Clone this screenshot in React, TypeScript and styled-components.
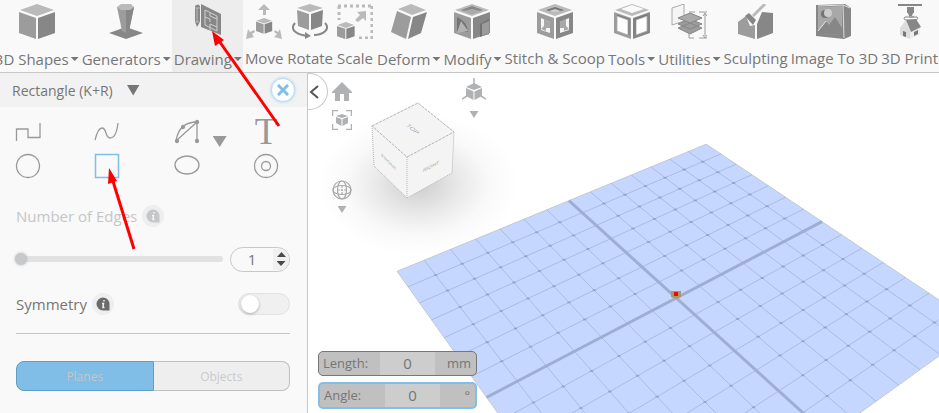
import React, { useState } from "react";
import styled, { createGlobalStyle } from "styled-components";

const GlobalStyle = createGlobalStyle`
  * { box-sizing: border-box; }
  body { margin: 0; font-family: "Open Sans", "Noto Sans", sans-serif; color: #767676; background: #fff; overflow: hidden; }
  button, input { font: inherit; color: inherit; }
  button { border: 0; padding: 0; background: none; cursor: pointer; }
  svg { display: block; }
`;

const Page = styled.div`
  position: relative;
  display: flex;
  flex-direction: column;
  height: 100vh;
  overflow: hidden;
`;

const Toolbar = styled.header`
  display: flex;
  justify-content: flex-end;
  flex: none;
  height: 73px;
  background: #f9f9f9;
  border-bottom: 1px solid #c8c8c8;
  overflow: hidden;
`;

const ToolbarItem = styled.button<{ $active?: boolean; $roomy?: boolean }>`
  display: flex;
  flex: none;
  flex-direction: column;
  align-items: center;
  gap: 8px;
  padding: 4px ${(p) => (p.$roomy ? 2 : 1)}px 0 2px;
  background: ${(p) => (p.$active ? "#ededed" : "transparent")};
`;

const ToolbarLabel = styled.span<{ $menu?: boolean }>`
  display: flex;
  align-items: center;
  gap: 2px;
  padding-top: ${(p) => (p.$menu ? 1 : 0)}px;
  font-size: 15px;
  line-height: 22px;
  white-space: nowrap;
`;

const Triangle = styled.span<{ $w: number; $h: number; $color: string }>`
  display: block;
  flex: none;
  width: ${(p) => p.$w}px;
  height: ${(p) => p.$h}px;
  background: ${(p) => p.$color};
  clip-path: polygon(0 0, 100% 0, 50% 100%);
`;

const Workspace = styled.div`
  display: flex;
  flex: 1;
  min-height: 0;
`;

const Panel = styled.aside`
  flex: none;
  width: 308px;
  background: #f9f9f9;
  border-right: 1px solid #c8c8c8;
`;

const PanelHeader = styled.div`
  display: flex;
  align-items: center;
  justify-content: space-between;
  height: 34px;
  padding: 0 12px;
  background: #f2f2f2;
`;

const PanelTitle = styled.button`
  display: flex;
  align-items: center;
  gap: 14px;
  font-size: 14px;
`;

const CloseButton = styled.button`
  display: grid;
  place-items: center;
  width: 24px;
  height: 24px;
  border: 1px solid #b9dcf3;
  border-radius: 50%;
  background: #fff;
  box-shadow: 0 0 3px #9fd0f0;
`;

const ToolGrid = styled.div`
  display: grid;
  grid-template-columns: repeat(4, 24px);
  grid-auto-rows: 34px;
  justify-content: space-between;
  align-items: center;
  padding: 8px 29px 0 16px;
`;

const ShapeTool = styled.button`
  position: relative;
  display: grid;
  place-items: center;
  width: 24px;
  height: 34px;
`;

const ToolMenuMark = styled.span`
  position: absolute;
  left: 38px;
  top: 21px;
`;

const TextGlyph = styled.span`
  font-family: "Liberation Serif", serif;
  font-size: 37px;
  line-height: 34px;
  color: #999;
`;

const Options = styled.div`
  display: flex;
  flex-direction: column;
  padding: 21px 17px 0 16px;
`;

const OptionTitle = styled.div<{ $dim?: boolean }>`
  display: flex;
  align-items: center;
  gap: 5px;
  height: 24px;
  font-size: 15px;
  color: ${(p) => (p.$dim ? "#c4c6c8" : "#767676")};
`;

const InfoButton = styled.button`
  width: 22px;
  height: 22px;
`;

const SliderRow = styled.div`
  display: flex;
  align-items: center;
  gap: 7px;
  height: 26px;
  margin: 18px 0 20px;
`;

const Slider = styled.input`
  appearance: none;
  flex: 1;
  min-width: 0;
  height: 14px;
  margin: 0 0 0 -1px;
  background: transparent;
  &::-webkit-slider-runnable-track {
    height: 6px;
    border-radius: 3px;
    background: #e2e2e2;
  }
  &::-webkit-slider-thumb {
    appearance: none;
    width: 12px;
    height: 12px;
    margin-top: -3px;
    border-radius: 50%;
    background: #c6c8ca;
    box-shadow: 0 0 3px #b8b8b8;
  }
`;

const NumberBox = styled.div`
  display: flex;
  align-items: center;
  flex: none;
  width: 60px;
  height: 25px;
  border: 1px solid #c8c8c8;
  border-radius: 13px;
  overflow: hidden;
`;

const NumberInput = styled.input`
  width: 42px;
  padding: 0;
  border: 0;
  background: none;
  text-align: center;
  font-size: 15px;
`;

const Stepper = styled.div`
  display: flex;
  flex: 1;
  flex-direction: column;
  align-items: center;
  justify-content: center;
  gap: 4px;
  height: 21px;
  background: #f0f0f0;
`;

const StepButton = styled.button<{ $up?: boolean }>`
  transform: ${(p) => (p.$up ? "rotate(180deg)" : "none")};
`;

const SwitchRow = styled.div`
  display: flex;
  align-items: center;
  justify-content: space-between;
`;

const Switch = styled.input`
  appearance: none;
  display: flex;
  align-items: center;
  width: 52px;
  height: 22px;
  margin: 0;
  padding: 0 2px;
  border: 1px solid #e2e2e2;
  border-radius: 11px;
  background: #f0f0f0;
  justify-content: flex-start;
  &:checked { justify-content: flex-end; background: #80bde7; }
  &::before {
    content: "";
    width: 18px;
    height: 18px;
    border-radius: 50%;
    background: #fff;
    box-shadow: 0 1px 3px #aaa;
  }
`;

const Divider = styled.hr`
  width: 100%;
  height: 1px;
  margin: 17px 0 27px;
  border: 0;
  background: #c8c8c8;
`;

const Segments = styled.div`
  display: flex;
  height: 30px;
`;

const Segment = styled.button<{ $on: boolean }>`
  flex: 1;
  font-size: 12px;
  border: 1px solid ${(p) => (p.$on ? "#5f9cc6" : "#bfbfbf")};
  background: ${(p) => (p.$on ? "#80bde7" : "#eee")};
  color: ${(p) => (p.$on ? "#c3c6c9" : "#c9cbcd")};
  &:first-child { border-radius: 8px 0 0 8px; }
  &:last-child { border-left-width: 0; border-radius: 0 8px 8px 0; }
`;

const Viewport = styled.main`
  position: relative;
  flex: 1;
  min-width: 0;
  background: #fff;
`;

const Scene = styled.svg`
  position: absolute;
  inset: 0;
  width: 100%;
  height: 100%;
`;

const CollapseButton = styled.button`
  position: absolute;
  left: 0;
  top: 0;
  display: grid;
  place-items: center start;
  width: 20px;
  height: 37px;
  padding-left: 1px;
  border: 1px solid #c8c8c8;
  border-left: 0;
  border-radius: 0 19px 19px 0;
  background: #fff;
`;

const ViewControls = styled.div<{ $left: number; $top: number; $gap: number }>`
  position: absolute;
  left: ${(p) => p.$left}px;
  top: ${(p) => p.$top}px;
  display: flex;
  flex-direction: column;
  align-items: center;
  gap: ${(p) => p.$gap}px;
`;

const ViewButton = styled.button`
  display: flex;
  flex-direction: column;
  align-items: center;
  gap: 6px;
`;

const Measures = styled.div`
  position: absolute;
  left: 10px;
  bottom: 4px;
  display: flex;
  flex-direction: column;
  gap: 6px;
  width: 159px;
`;

const Measure = styled.label<{ $focus?: boolean }>`
  display: flex;
  align-items: stretch;
  height: ${(p) => (p.$focus ? 27 : 25)}px;
  border: ${(p) => (p.$focus ? "2px solid #7fbfe8" : "1px solid #777")};
  border-radius: 5px;
  background: #c0c0c0;
  overflow: hidden;
  font-size: 13px;
  line-height: 23px;
`;

const MeasureName = styled.span<{ $w: number }>`
  width: ${(p) => p.$w}px;
  padding-left: 4px;
`;

const MeasureInput = styled.input`
  width: 55px;
  padding: 0;
  border: 0;
  outline: 0;
  background: #cdcdcd;
  text-align: center;
  font-size: 15px;
`;

const MeasureUnit = styled.span`
  flex: 1;
  padding-right: 5px;
  text-align: right;
`;

const Annotation = styled.svg`
  position: absolute;
  left: 0;
  top: 0;
  width: 300px;
  height: 260px;
  pointer-events: none;
`;

const L = "#bababa", M = "#9c9c9c", D = "#878787";

const Cube = () => (
  <>
    <path d="M18 0L35 6L18 12L1 6Z" fill={L} />
    <path d="M0 8L17 14V35L0 29Z" fill={M} />
    <path d="M36 8L19 14V35L36 29Z" fill={D} />
  </>
);

const toolbarArt: Record<string, React.ReactNode> = {
  shapes: <Cube />,
  generators: (
    <>
      <path d="M1 29L18 23L35 29L18 35Z" fill={D} />
      <path d="M9 3L14 27Q18 30 21 27L26 3Z" fill={M} />
      <path d="M18 6L26 3L21 27L18 29Z" fill={D} />
      <path d="M9 3L13 0H23L26 3L22 6H13Z" fill={L} />
    </>
  ),
  drawing: (
    <>
      <path d="M5 2Q8 -1 10 2V18L7 23L5 18Z" fill={D} />
      <path d="M5 4H10M7 4V18M5 18H10" stroke={L} fill="none" />
      <path d="M11 0L31 10V31L11 23Z" fill={D} />
      <path d="M15 6L27 12V27L15 21ZM15 13L20 15V18M20 9V12L27 15M20 27V20L27 23" fill="none" stroke="#d0d0d0" strokeWidth="1" />
    </>
  ),
  move: (
    <>
      <path d="M18 0L24 6H20V11H17V6H12ZM0 35L2 25L4 28L8 26L9 28L6 30L8 33ZM36 35L34 25L32 28L29 26L28 28L31 30L28 33Z" fill={L} />
      <g transform="translate(10 14) scale(.45)"><Cube /></g>
    </>
  ),
  rotate: (
    <>
      <path d="M5 4L18 0L31 4L18 8Z" fill={L} />
      <path d="M5 6L17 10V26L6 22Z" fill={M} />
      <path d="M31 6L19 10V26L30 22Z" fill={D} />
      <path d="M3 19C-3 26 5 31 17 32M33 19C39 25 31 31 22 31" fill="none" stroke={D} strokeWidth="2" />
      <path d="M13 28L19 32L13 35Z" fill={D} />
    </>
  ),
  scale: (
    <>
      <path d="M1 2H36M35 2V35M2 2V16M22 34H36" stroke={L} strokeWidth="3" strokeDasharray="3 3" fill="none" />
      <path d="M29 7V17L26 14L21 18L18 16L23 11L20 8Z" fill={L} />
      <g transform="translate(0 18) scale(.49)"><Cube /></g>
    </>
  ),
  deform: (
    <>
      <path d="M7 5L20 0L35 6L21 11Z" fill={L} />
      <path d="M6 7L20 13L15 35L0 28Z" fill={M} />
      <path d="M36 8L22 13L17 35L30 29Z" fill={D} />
    </>
  ),
  modify: (
    <>
      <Cube />
      <path d="M18 2L29 6L18 10L7 6Z" fill={D} /><path d="M18 5L27 7L18 10L9 7Z" fill="#aaa" />
      <path d="M3 13Q13 17 14 28L3 27Z" fill="#747474" /><path d="M7 17L14 27L3 29Z" fill="#b3b3b3" />
      <path d="M26 20L35 15V30L26 33Z" fill="#727272" /><path d="M28 20L35 17V29L28 32Z" fill={M} />
    </>
  ),
  stitch: (
    <>
      <Cube />
      <path d="M18 3L27 6L18 9L9 6Z" fill="#777" /><path d="M18 5L24 7L18 9L12 7Z" fill="#ccc" />
      <path d="M4 14L13 18V29L4 26ZM32 14L23 18V29L32 26Z" fill="#f5f5f5" />
      <path d="M7 15L13 18V24H9V27L4 25L7 22ZM29 15L23 18V24H27V27L32 25L29 22Z" fill="#a8a8a8" />
    </>
  ),
  tools: (
    <>
      <Cube />
      <path d="M18 1L30 5L18 9L7 5Z" fill="#fafafa" />
      <path d="M3 12L14 16V31L3 27ZM33 12L22 16V31L33 27Z" fill="#fff" stroke="#aaa" strokeWidth=".8" />
      <path d="M3 11L15 15V31M33 11L21 15V31" fill="none" stroke="#777" strokeWidth="1" />
    </>
  ),
  utilities: (
    <>
      <path d="M1 4L13 0V17L1 21Z" fill="#f5f5f5" stroke="#aaa" />
      <path d="M7 24L19 19L31 24L19 30ZM7 20L19 15L31 20L19 25Z" fill={M} stroke={D} strokeWidth="1" />
      <path d="M7 14L19 9L31 14L19 19Z" fill="#aaa" stroke={D} />
      <path d="M18 8H24M28 8H36M18 29V34H23M28 34H36M34 10V32M32 12L34 9L36 12M32 31L34 34L36 31" fill="none" stroke={M} strokeWidth="1" />
    </>
  ),
  sculpting: (
    <>
      <path d="M0 18L8 12L12 22L17 21V35L0 30Z" fill={M} />
      <path d="M19 20L24 8L35 9V29L19 35Z" fill={D} />
      <path d="M7 12L11 9L18 16L15 21Z" fill={D} /><path d="M15 12L27 0" stroke={L} strokeWidth="3" />
    </>
  ),
  image: (
    <>
      <path d="M0 1L29 0L35 4V32L28 35L0 32Z" fill={D} />
      <path d="M2 3L26 2V31L2 30Z" fill="#a8a8a8" />
      <path d="M2 2L27 1L28 34M27 1L34 4" stroke="#ddd" fill="none" />
      <circle cx="9" cy="10" r="4" fill="#747474" /><circle cx="12" cy="9" r="4" fill="#ccc" />
      <path d="M2 26L10 17L13 21L19 13L26 24V31L2 30Z" fill={D} /><path d="M2 27L10 17" stroke="#eee" />
    </>
  ),
  print: (
    <>
      <path d="M6 0H30V2H6ZM15 3H22V9H21L20 12H17L16 9H15Z" fill={D} />
      <path d="M17 13H25Q27 15 24 16H13Q11 14 13 13H22" fill="none" stroke={D} />
      <path d="M8 24L14 16L18 26V35L8 31Z" fill="#ddd" />
      <path d="M18 26L28 21V31L18 35Z" fill="#ededed" />
      <path d="M14 16L24 15L29 23L19 28Z" fill={D} />
      <path d="M11 27L14 28V33L11 32ZM22 28L26 26V30L22 32Z" fill="#777" />
    </>
  ),
};

const toolbarItems = [
  { id: "shapes", label: "3D Shapes", menu: true },
  { id: "generators", label: "Generators", menu: true },
  { id: "drawing", label: "Drawing", menu: true },
  { id: "move", label: "Move", roomy: true },
  { id: "rotate", label: "Rotate", roomy: true },
  { id: "scale", label: "Scale", roomy: true },
  { id: "deform", label: "Deform", menu: true },
  { id: "modify", label: "Modify", menu: true },
  { id: "stitch", label: "Stitch & Scoop" },
  { id: "tools", label: "Tools", menu: true },
  { id: "utilities", label: "Utilities", menu: true },
  { id: "sculpting", label: "Sculpting" },
  { id: "image", label: "Image To 3D" },
  { id: "print", label: "3D Print" },
];

const shapeTools = [
  { id: "Polyline", art: <path d="M0.5 21V9H12V17.500H24V3" /> },
  { id: "Spline", art: <path d="M0 20C2 12 4 8 7 8C12 8 10 18 15 18C19 18 22 12 23 3" /> },
  {
    id: "Arc",
    menu: true,
    art: (
      <>
        <path d="M1 21Q4 2 22 2V21M1 21L22 2" />
        <g fill="#999"><circle cx="2" cy="21" r="1.500" /><circle cx="22" cy="2" r="1.500" /><circle cx="22" cy="21" r="1.500" /><circle cx="8" cy="7" r="1.500" /></g>
      </>
    ),
  },
  { id: "Text" },
  { id: "Circle", art: <circle cx="12" cy="12" r="11.500" /> },
  { id: "Rectangle", art: <path d="M0.500 0.500H23.500V23.500H0.500Z" stroke="#80bde7" strokeWidth="1.500" /> },
  { id: "Ellipse", art: <ellipse cx="12" cy="11" rx="12" ry="9" /> },
  { id: "Ring", art: <><circle cx="12" cy="12" r="11.500" /><circle cx="12" cy="12" r="4.500" /></> },
];

const Info = ({ color, label }: { color: string; label: string }) => (
  <InfoButton aria-label={label}>
    <svg width="22" height="22" viewBox="0 0 22 22">
      <circle cx="11" cy="11" r="11" fill="#eee" />
      <path d="M11 4.500A6.500 6.500 0 1 0 11 17.500H17.500V11A6.500 6.500 0 0 0 11 4.500Z" fill={color} />
      <path d="M12 7V8.500M10 10.500H11.500L11 14.500H12.500" fill="none" stroke="#f4f4f4" strokeWidth="1.500" />
    </svg>
  </InfoButton>
);

// Perspective projection of the ground plane, in units from -7 to 7.
const projectPoint = (u: number, v: number) => {
  const s = u / 7, t = v / 7;
  const w = 1 + 0.131 * s - 0.172 * t;
  return { x: (676.3 + 253.4 * s + 9.5 * t) / w, y: (298 - 47.3 * s + 62.8 * t) / w };
};
const project = (u: number, v: number) => {
  const p = projectPoint(u, v);
  return `${p.x} ${p.y}`;
};
const minorLines = Array.from({ length: 13 }, (_, i) => i - 6).filter((n) => n !== 0);

const GroundPlane = () => (
  <>
    <path d={`M${project(-7, -7)}L${project(7, -7)}L${project(7, 7)}L${project(-7, 7)}Z`} fill="#c6d7ff" stroke="#c3c8d6" />
    {minorLines.map((n) => (
      <path key={n} d={`M${project(n, -7)}L${project(n, 7)}M${project(-7, n)}L${project(7, n)}`} stroke="#8893b0" strokeOpacity=".42" fill="none" />
    ))}
    {minorLines.flatMap((u) =>
      minorLines.map((v) => {
        const p = projectPoint(u, v);
        return <ellipse key={`${u},${v}`} cx={p.x} cy={p.y} rx="2" ry="1" fill="#7f8cb0" fillOpacity=".5" />;
      })
    )}
    <path d={`M${project(0, -7)}L${project(0, 7)}M${project(-7, 0)}L${project(7, 0)}`} stroke="#9fadd2" strokeWidth="3" fill="none" />
    <path d="M671 291H681V297L676 299L671 297Z" fill="#a49b69" />
    <rect x="674" y="292" width="4" height="4" fill="#f00" />
  </>
);

const NavigationCube = () => (
  <>
    <defs>
      <radialGradient id="cubeShadow">
        <stop offset="0" stopColor="#000" stopOpacity=".2" />
        <stop offset=".4" stopColor="#000" stopOpacity=".09" />
        <stop offset=".7" stopColor="#000" stopOpacity=".025" />
        <stop offset="1" stopColor="#000" stopOpacity="0" />
      </radialGradient>
    </defs>
    <ellipse cx="418" cy="184" rx="100" ry="72" fill="url(#cubeShadow)" />
    <path d="M372 126L418 103L454 132L452 173L407 198L374 166Z" fill="#f4f4f4" />
    <g fill="none" stroke="#b4b4b4">
      <path d="M372 126L418 103L454 132L407 157Z" strokeDasharray="3 1" />
      <path d="M372 126L374 166L407 198L452 173L454 132M407 157V198" strokeDasharray="1 1" />
    </g>
    <g fill="#a2a2a2" fontFamily="Liberation Sans, sans-serif" textAnchor="middle">
      <text transform="matrix(.78 .63 -.7 .35 411 130)" fontSize="7">TOP</text>
      <text transform="matrix(.72 .7 .05 .8 389 164)" fontSize="6">FRONT</text>
      <text transform="matrix(.85 -.45 -.05 .8 431 168)" fontSize="6">RIGHT</text>
    </g>
  </>
);

export default function App() {
  const [edges, setEdges] = useState(1);
  const [target, setTarget] = useState("Planes");
  const [symmetry, setSymmetry] = useState(false);
  const [length, setLength] = useState("0");
  const [angle, setAngle] = useState("0");

  return (
    <Page>
      <GlobalStyle />
      <Toolbar>
        {toolbarItems.map((item) => (
          <ToolbarItem key={item.id} $active={item.id === "drawing"} $roomy={item.roomy}>
            <svg width="36" height="35" viewBox="0 0 36 35">{toolbarArt[item.id]}</svg>
            <ToolbarLabel $menu={item.menu}>
              {item.label}
              {item.menu && <Triangle $w={8} $h={4} $color="#767676" />}
            </ToolbarLabel>
          </ToolbarItem>
        ))}
      </Toolbar>
      <Workspace>
        <Panel>
          <PanelHeader>
            <PanelTitle>
              Rectangle (K+R)
              <Triangle $w={13} $h={11} $color="#767676" />
            </PanelTitle>
            <CloseButton aria-label="Close">
              <svg width="12" height="12" viewBox="0 0 12 12"><path d="M2 2L10 10M10 2L2 10" stroke="#80bde7" strokeWidth="3" strokeLinecap="square" /></svg>
            </CloseButton>
          </PanelHeader>
          <ToolGrid>
            {shapeTools.map((tool) => (
              <ShapeTool key={tool.id} aria-label={tool.id}>
                {tool.art ? (
                  <svg width="24" height="24" viewBox="0 0 24 24" fill="none" stroke="#999" strokeWidth="1.300" overflow="visible">{tool.art}</svg>
                ) : (
                  <TextGlyph>T</TextGlyph>
                )}
                {tool.menu && <ToolMenuMark><Triangle $w={14} $h={11} $color="#999" /></ToolMenuMark>}
              </ShapeTool>
            ))}
          </ToolGrid>
          <Options>
            <OptionTitle $dim>
              <label htmlFor="edges">Number of Edges</label>
              <Info color="#c4c6c8" label="About number of edges" />
            </OptionTitle>
            <SliderRow>
              <Slider id="edges" type="range" min={1} max={20} value={edges} onChange={(e) => setEdges(Number(e.target.value))} />
              <NumberBox>
                <NumberInput aria-label="Number of edges" value={edges} onChange={(e) => setEdges(Number(e.target.value) || 1)} />
                <Stepper>
                  <StepButton $up aria-label="Increase" onClick={() => setEdges(edges + 1)}><Triangle $w={9} $h={5} $color="#484848" /></StepButton>
                  <StepButton aria-label="Decrease" onClick={() => setEdges(Math.max(1, edges - 1))}><Triangle $w={9} $h={5} $color="#484848" /></StepButton>
                </Stepper>
              </NumberBox>
            </SliderRow>
            <SwitchRow>
              <OptionTitle>
                <label htmlFor="symmetry">Symmetry</label>
                <Info color="#6b6b6b" label="About symmetry" />
              </OptionTitle>
              <Switch id="symmetry" type="checkbox" checked={symmetry} onChange={(e) => setSymmetry(e.target.checked)} />
            </SwitchRow>
            <Divider />
            <Segments>
              {["Planes", "Objects"].map((name) => (
                <Segment key={name} $on={target === name} onClick={() => setTarget(name)}>{name}</Segment>
              ))}
            </Segments>
          </Options>
        </Panel>
        <Viewport>
          <Scene viewBox="308 73 631 340" preserveAspectRatio="xMinYMin slice">
            <NavigationCube />
            <GroundPlane />
          </Scene>
          <CollapseButton aria-label="Collapse panel">
            <svg width="12" height="14" viewBox="0 0 12 14"><path d="M9 1L2 7L9 13" fill="none" stroke="#555" strokeWidth="2" /></svg>
          </CollapseButton>
          <ViewControls $left={24} $top={9} $gap={8}>
            <ViewButton aria-label="Home view">
              <svg width="20" height="20" viewBox="0 0 20 20" fill="#b0b1b3"><path d="M10 0L20 10V11H17V19H12V12H8V19H3V11H0V10Z" /></svg>
            </ViewButton>
            <ViewButton aria-label="Fit view">
              <svg width="20" height="20" viewBox="0 0 20 20" fill="#b0b1b3">
                <path d="M0.500 6V0.500H6M14 0.500H19.500V6M19.500 14V19.500H14M6 19.500H0.500V14" fill="none" stroke="#b0b1b3" strokeWidth="1.500" />
                <path d="M4 6L10 4L16 6L10 8ZM4 7L9.500 9V16L4 13ZM16 7L10.500 9V16L16 13Z" />
              </svg>
            </ViewButton>
          </ViewControls>
          <ViewControls $left={24} $top={107} $gap={6}>
            <ViewButton aria-label="Navigate">
              <svg width="20" height="20" viewBox="0 0 20 20" fill="none" stroke="#a9aaac" strokeWidth="1.200">
                <circle cx="10" cy="10" r="9" /><ellipse cx="10" cy="10" rx="4.500" ry="9" /><ellipse cx="10" cy="10" rx="9" ry="4.500" />
                <path d="M10 6V14M6 10H14" strokeDasharray="2 1" />
              </svg>
              <Triangle $w={9} $h={7} $color="#b0b1b3" />
            </ViewButton>
          </ViewControls>
          <ViewControls $left={154} $top={5} $gap={6}>
            <ViewButton aria-label="Axis view">
              <svg width="24" height="27" viewBox="0 0 24 27" fill="#b0b1b3">
                <path d="M12 0V6M5 18L0 21M19 18L24 21" stroke="#b0b1b3" strokeWidth="1.500" />
                <path d="M12 5L20 9L12 12L4 9ZM4 10L11.500 13.500V22L4 18ZM20 10L12.500 13.500V22L20 18Z" />
              </svg>
              <Triangle $w={9} $h={7} $color="#b0b1b3" />
            </ViewButton>
          </ViewControls>
          <Measures>
            <Measure>
              <MeasureName $w={61}>Length:</MeasureName>
              <MeasureInput value={length} onChange={(e) => setLength(e.target.value)} />
              <MeasureUnit>mm</MeasureUnit>
            </Measure>
            <Measure $focus>
              <MeasureName $w={65}>Angle:</MeasureName>
              <MeasureInput value={angle} onChange={(e) => setAngle(e.target.value)} />
              <MeasureUnit>°</MeasureUnit>
            </Measure>
          </Measures>
        </Viewport>
      </Workspace>
      <Annotation viewBox="0 0 300 260" aria-hidden="true">
        <path d="M217 38L279 126M112 178L134 249" stroke="#f00" strokeWidth="3" fill="none" />
        <path d="M212 31L224 40L215 46ZM109 168L117 181L108 184Z" fill="#f00" />
      </Annotation>
    </Page>
  );
}
